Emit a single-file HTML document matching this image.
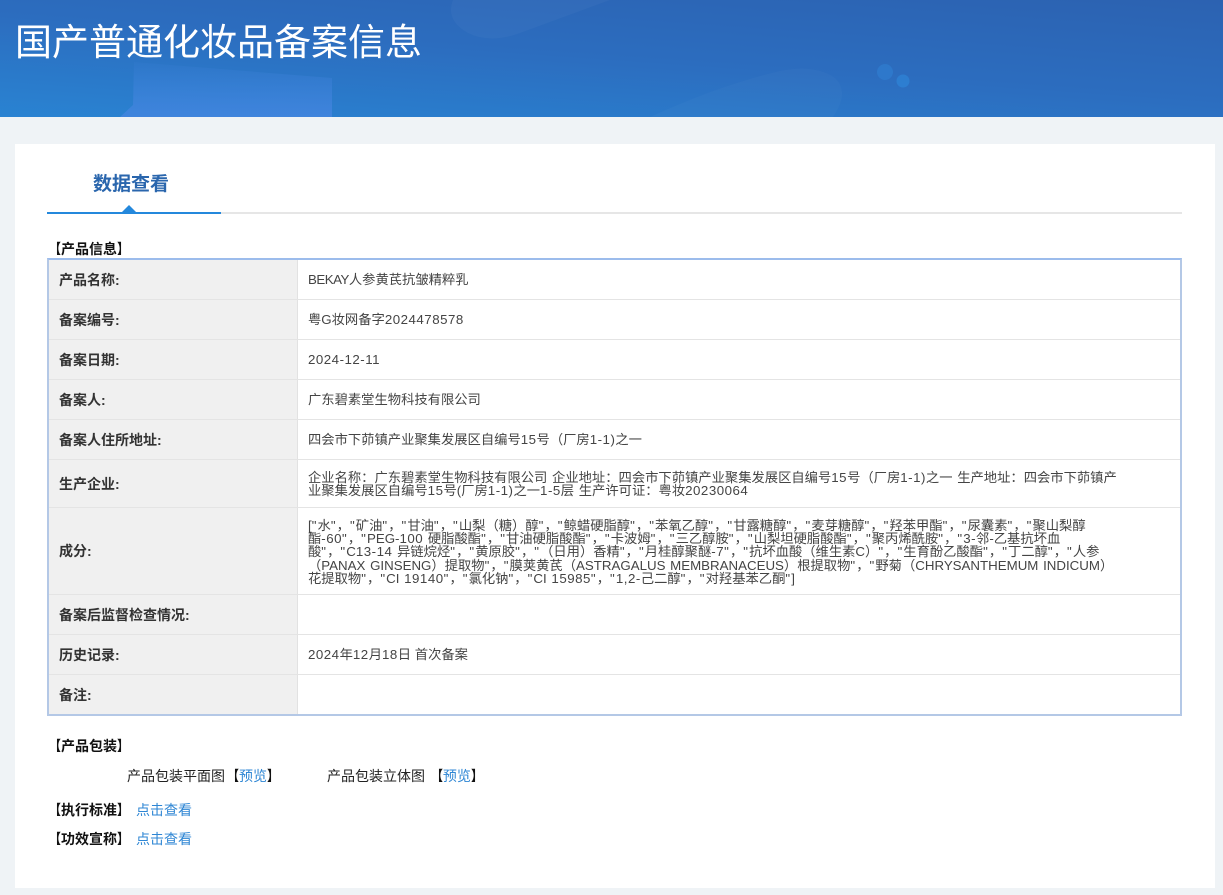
<!DOCTYPE html>
<html lang="zh">
<head>
<meta charset="utf-8">
<title>国产普通化妆品备案信息</title>
<style>
html,body{margin:0;padding:0;}
body{position:relative;width:1223px;height:895px;overflow:hidden;background:#eff3f6;font-family:"Liberation Sans","Noto Sans CJK SC",sans-serif;font-size:14px;color:#333;}
.a{position:absolute;white-space:nowrap;}
#hd{position:absolute;left:0;top:0;width:1223px;height:117px;background:linear-gradient(184deg,#2c62b1 0%,#2c6dbf 50%,#2983d2 100%);overflow:hidden;}
#card{position:absolute;left:15px;top:144px;width:1200px;height:744px;background:#fff;}
.row{position:absolute;left:49px;width:1131px;border-bottom:1px solid #e4e4e4;box-sizing:border-box;}
.lab{position:absolute;left:0;top:0;bottom:0;width:248px;background:#f0f0f0;border-right:1px solid #e2e2e2;box-sizing:content-box;}
.lt{position:absolute;left:59px;font-weight:bold;font-size:14px;color:#333;line-height:20px;white-space:nowrap;}
.vt{position:absolute;left:308px;font-size:13.3px;color:#444;line-height:20px;white-space:nowrap;}
.ml{position:absolute;left:308px;font-size:13.3px;color:#444;line-height:12px;white-space:pre;word-spacing:1px;}
.b{font-weight:bold;color:#111;line-height:18px;font-size:14px;}
.k{color:#222;line-height:18px;font-size:14px;}
.l{color:#2e86d4;}
.n{letter-spacing:.5px;}
.c{letter-spacing:-.5px;}
i{font-style:normal;letter-spacing:1.1px;}
.o,.e{display:inline-block;width:14px;font-weight:bold;color:#111;transform:scaleX(.85);}
.o{transform-origin:100% 50%;}
.e{transform-origin:0 50%;}
</style>
</head>
<body>
<div id="hd">
<svg width="1223" height="117" style="position:absolute;left:0;top:0">
<defs>
<linearGradient id="g1" x1="0" y1="0" x2="0" y2="1"><stop offset="0" stop-color="#4585e0" stop-opacity=".1"/><stop offset="1" stop-color="#4585e0" stop-opacity=".8"/></linearGradient>
</defs>
<path d="M134 62L332 78V117H120L133 105Z" fill="url(#g1)"/>
<path d="M453 0H610L520 33Q490 44 468 33Q445 20 453 0Z" fill="#fff" opacity=".03"/>
<path d="M650 117Q720 85 780 71Q815 64 835 78Q850 92 833 117Z" fill="#fff" opacity=".025"/>
<circle cx="885" cy="72" r="8" fill="#2f84d8" opacity=".5"/>
<circle cx="903" cy="81" r="6.5" fill="#2f88dc" opacity=".6"/>
</svg>
<div class="a" style="left:15px;top:19px;font-size:37px;line-height:48px;color:#fff;">国产普通化妆品备案信息</div>
</div>

<div id="card"></div>

<div class="a" style="left:93px;top:172px;font-size:19px;line-height:26px;font-weight:bold;color:#2a66ad;">数据查看</div>
<div class="a" style="left:47px;top:212px;width:1135px;height:2px;background:#e6e6e6;"></div>
<div class="a" style="left:47px;top:212px;width:174px;height:2px;background:#2488dc;"></div>
<div class="a" style="left:122px;top:205px;width:0;height:0;border-left:7px solid transparent;border-right:7px solid transparent;border-bottom:7px solid #2488dc;"></div>

<div class="a b" style="left:47px;top:240px;"><span class="o">【</span>产品信息<span class="e">】</span></div>

<div class="a" style="left:47px;top:258px;width:1135px;height:458px;border:2px solid #b4c8e6;border-top-color:#9cbcec;box-sizing:border-box;"></div>

<div class="row" style="top:260px;height:40px;"><div class="lab"></div></div>
<div class="row" style="top:300px;height:40px;"><div class="lab"></div></div>
<div class="row" style="top:340px;height:40px;"><div class="lab"></div></div>
<div class="row" style="top:380px;height:40px;"><div class="lab"></div></div>
<div class="row" style="top:420px;height:40px;"><div class="lab"></div></div>
<div class="row" style="top:460px;height:48px;"><div class="lab"></div></div>
<div class="row" style="top:508px;height:87px;"><div class="lab"></div></div>
<div class="row" style="top:595px;height:40px;"><div class="lab"></div></div>
<div class="row" style="top:635px;height:40px;"><div class="lab"></div></div>
<div class="row" style="top:675px;height:39px;border-bottom:0;"><div class="lab"></div></div>

<div class="lt" style="top:270px;">产品名称:</div>
<div class="lt" style="top:310px;">备案编号:</div>
<div class="lt" style="top:350px;">备案日期:</div>
<div class="lt" style="top:390px;">备案人:</div>
<div class="lt" style="top:430px;">备案人住所地址:</div>
<div class="lt" style="top:474px;">生产企业:</div>
<div class="lt" style="top:541px;">成分:</div>
<div class="lt" style="top:605px;">备案后监督检查情况:</div>
<div class="lt" style="top:645px;">历史记录:</div>
<div class="lt" style="top:685px;">备注:</div>

<div class="vt" style="top:270px;"><span class="c">BEKAY</span>人参黄芪抗皱精粹乳</div>
<div class="vt" style="top:310px;">粤G妆网备字<span class="n">2024478578</span></div>
<div class="vt" style="top:350px;"><span class="n">2024-12-11</span></div>
<div class="vt" style="top:390px;">广东碧素堂生物科技有限公司</div>
<div class="vt" style="top:430px;">四会市下茆镇产业聚集发展区自编号<span class="n">15</span>号（厂房<span class="n">1-1)</span>之一</div>

<div class="ml" style="top:472px;">企业名称：广东碧素堂生物科技有限公司 企业地址：四会市下茆镇产业聚集发展区自编号<span class="n">15</span>号（厂房<span class="n">1-1)</span>之一 生产地址：四会市下茆镇产</div>
<div class="ml" style="top:485px;">业聚集发展区自编号<span class="n">15</span>号(厂房<span class="n">1-1)</span>之一<span class="n">1-5</span>层 生产许可证：粤妆<span class="n">20230064</span></div>

<div class="ml" style="top:520px;">[<i>"</i>水<i>"</i>，<i>"</i>矿油<i>"</i>，<i>"</i>甘油<i>"</i>，<i>"</i>山梨（糖）醇<i>"</i>，<i>"</i>鲸蜡硬脂醇<i>"</i>，<i>"</i>苯氧乙醇<i>"</i>，<i>"</i>甘露糖醇<i>"</i>，<i>"</i>麦芽糖醇<i>"</i>，<i>"</i>羟苯甲酯<i>"</i>，<i>"</i>尿囊素<i>"</i>，<i>"</i>聚山梨醇</div>
<div class="ml" style="top:533px;">酯<span class="n">-60</span><i>"</i>，<i>"</i>PEG-<span class="n">100</span> 硬脂酸酯<i>"</i>，<i>"</i>甘油硬脂酸酯<i>"</i>，<i>"</i>卡波姆<i>"</i>，<i>"</i>三乙醇胺<i>"</i>，<i>"</i>山梨坦硬脂酸酯<i>"</i>，<i>"</i>聚丙烯酰胺<i>"</i>，<i>"</i><span class="n">3-</span>邻-乙基抗坏血</div>
<div class="ml" style="top:546px;">酸<i>"</i>，<i>"</i>C<span class="n">13-14</span> 异链烷烃<i>"</i>，<i>"</i>黄原胶<i>"</i>，<i>"</i>（日用）香精<i>"</i>，<i>"</i>月桂醇聚醚<span class="n">-7</span><i>"</i>，<i>"</i>抗坏血酸（维生素C）<i>"</i>，<i>"</i>生育酚乙酸酯<i>"</i>，<i>"</i>丁二醇<i>"</i>，<i>"</i>人参</div>
<div class="ml" style="top:560px;">（PANAX GINSENG）提取物<i>"</i>，<i>"</i>膜荚黄芪（ASTRAGALUS MEMBRANACEUS）根提取物<i>"</i>，<i>"</i>野菊（CHRYSANTHEMUM INDICUM）</div>
<div class="ml" style="top:573px;">花提取物<i>"</i>，<i>"</i>CI <span class="n">19140</span><i>"</i>，<i>"</i>氯化钠<i>"</i>，<i>"</i>CI <span class="n">15985</span><i>"</i>，<i>"</i><span class="n">1,2-</span>己二醇<i>"</i>，<i>"</i>对羟基苯乙酮<i>"</i>]</div>

<div class="vt" style="top:645px;"><span class="n">2024</span>年<span class="n">12</span>月<span class="n">18</span>日 首次备案</div>

<div class="a b" style="left:47px;top:737px;"><span class="o">【</span>产品包装<span class="e">】</span></div>
<div class="a k" style="left:127px;top:767px;">产品包装平面图<span class="o">【</span><span class="l">预览</span><span class="e">】</span></div>
<div class="a k" style="left:327px;top:767px;">产品包装立体图 <span class="o">【</span><span class="l">预览</span><span class="e">】</span></div>
<div class="a b" style="left:47px;top:801px;"><span class="o">【</span>执行标准<span class="e">】</span></div>
<div class="a l" style="left:136px;top:801px;line-height:18px;">点击查看</div>
<div class="a b" style="left:47px;top:830px;"><span class="o">【</span>功效宣称<span class="e">】</span></div>
<div class="a l" style="left:136px;top:830px;line-height:18px;">点击查看</div>
</body>
</html>
